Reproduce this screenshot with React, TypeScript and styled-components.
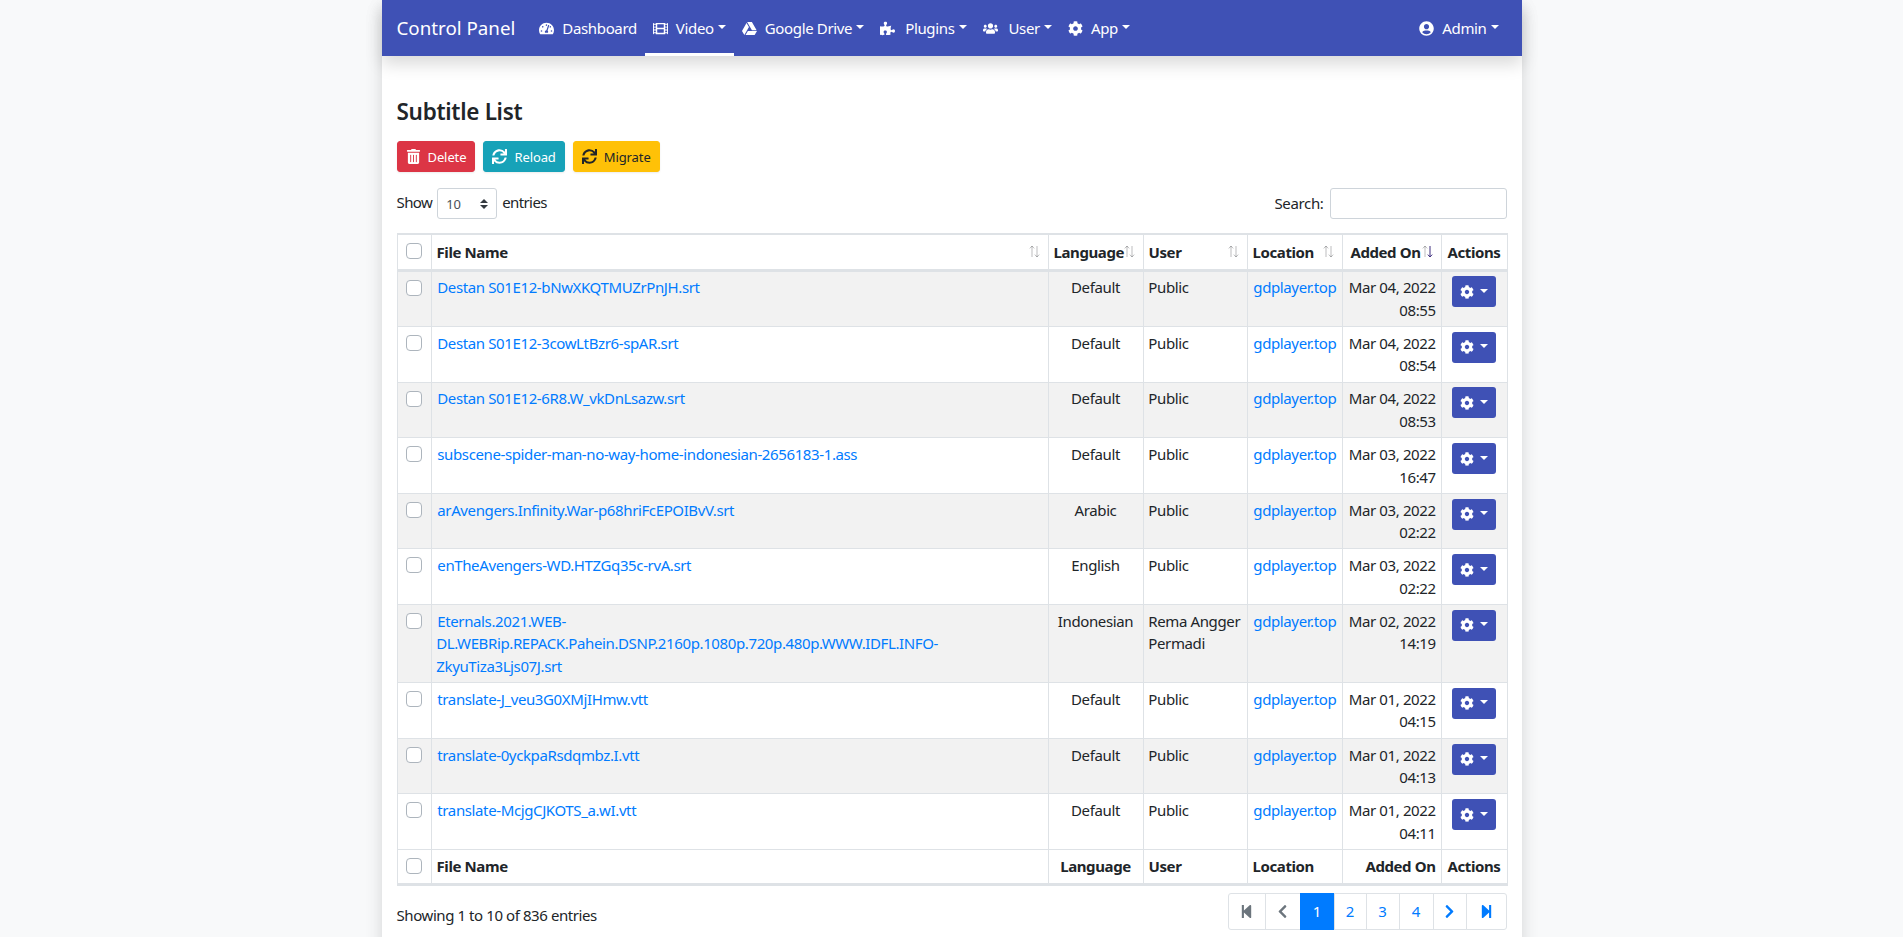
import React from 'react';
import styled, { createGlobalStyle } from 'styled-components';
import {
    FaTachometerAlt,
    FaFilm,
    FaGoogleDrive,
    FaPuzzlePiece,
    FaUsers,
    FaCog,
    FaUserCircle,
    FaTrashAlt,
    FaSync,
    FaStepBackward,
    FaStepForward,
    FaChevronLeft,
    FaChevronRight,
} from 'react-icons/fa';

const FONT = '"Noto Sans", "Open Sans", Arial, sans-serif';

const GlobalStyle = createGlobalStyle`
    html { overflow: hidden; }
    body {
        margin: 0;
        background: #f8f9fa;
        color: #212529;
        font-family: ${FONT};
        font-size: 15px;
        line-height: 1.5;
    }
    * { box-sizing: border-box; }
    svg { height: 1em; width: auto; }
`;

const Page = styled.div`
    width: 1140px;
    min-height: 100vh;
    margin: 0 auto;
    background: #fff;
    box-shadow: 0 8px 16px rgba(0, 0, 0, 0.15);
`;

const Navbar = styled.nav`
    height: 56px;
    padding: 0 15px;
    display: flex;
    align-items: stretch;
    background: #3f51b5;
    box-shadow: 0 8px 16px rgba(0, 0, 0, 0.15);
`;

const Brand = styled.a`
    align-self: center;
    margin-right: 16px;
    color: #fff;
    font-size: 18.75px;
    letter-spacing: 0;
    white-space: nowrap;
`;

const NavLink = styled.a<{ $active?: boolean; $right?: boolean; $extra?: number }>`
    display: flex;
    align-items: center;
    gap: 8px;
    padding: 0 8px;
    margin-left: ${(p) => (p.$right ? 'auto' : '0')};
    color: #fff;
    letter-spacing: -0.35px;
    white-space: nowrap;
    border-bottom: 3px solid ${(p) => (p.$active ? '#fff' : 'transparent')};
    border-top: 3px solid transparent;
    svg {
        font-size: 15px;
        margin-right: ${(p) => p.$extra ?? 0}px;
    }
`;

const Caret = styled.i`
    display: inline-block;
    width: 0;
    height: 0;
    margin-left: -4px;
    margin-bottom: 3px;
    border-top: 4.5px solid currentColor;
    border-left: 4.5px solid transparent;
    border-right: 4.5px solid transparent;
`;

const Content = styled.main`
    padding: 42px 15px 20px;
`;

const Heading = styled.h3`
    margin: 0 0 16px;
    font-size: 22.5px;
    font-weight: 600;
    line-height: 27px;
    letter-spacing: -0.3px;
`;

const Toolbar = styled.div`
    display: flex;
    gap: 8px;
    margin-bottom: 16px;
`;

const ActionButton = styled.button<{ $bg: string; $fg: string }>`
    height: 31px;
    padding: 0 8px;
    display: flex;
    align-items: center;
    gap: 7px;
    border: 1px solid ${(p) => p.$bg};
    border-radius: 3px;
    background: ${(p) => p.$bg};
    color: ${(p) => p.$fg};
    font-family: ${FONT};
    font-size: 13px;
    letter-spacing: -0.1px;
    box-shadow: 0 1px 2px rgba(0, 0, 0, 0.08);
    svg { font-size: 15px; }
`;

const FilterRow = styled.div`
    display: flex;
    justify-content: space-between;
    align-items: flex-start;
    height: 31px;
    margin-bottom: 14px;
`;

const Label = styled.label`
    display: flex;
    align-items: center;
    gap: 6px;
    letter-spacing: -0.35px;
`;

const ShowLabel = styled(Label)`
    margin-top: -3px;
    gap: 5px;
    letter-spacing: -0.6px;
`;

const Select = styled.select`
    appearance: none;
    width: 60px;
    height: 31px;
    margin-top: 3px;
    padding: 0 8px;
    border: 1px solid #ced4da;
    border-radius: 3px;
    background: #fff url("data:image/svg+xml,%3csvg xmlns='http://www.w3.org/2000/svg' width='4' height='5' viewBox='0 0 4 5'%3e%3cpath fill='%23343a40' d='M2 0L0 2h4zm0 5L0 3h4z'/%3e%3c/svg%3e") no-repeat right 8px center / 8px 10px;
    color: #495057;
    font-family: ${FONT};
    font-size: 13px;
`;

const SearchInput = styled.input`
    width: 177px;
    height: 31px;
    border: 1px solid #ced4da;
    border-radius: 3px;
    background: #fff;
`;

const Table = styled.table`
    width: 1110px;
    table-layout: fixed;
    border-collapse: collapse;
    border: 1px solid #dee2e6;
`;

const Col = styled.col<{ $w: number }>`
    width: ${(p) => p.$w}px;
`;

const HeadCell = styled.th<{ $align?: string; $sort?: boolean }>`
    position: relative;
    height: 36px;
    padding: 4px ${(p) => (p.$sort ? '20px' : '5px')} 4px 5px;
    border: 1px solid #dee2e6;
    border-top-width: 2px;
    border-bottom-width: 3px;
    text-align: ${(p) => p.$align || 'left'};
    font-weight: 700;
    letter-spacing: -0.4px;
    white-space: nowrap;
`;

const FootCell = styled(HeadCell)`
    height: 35px;
    border-top-width: 1px;
    border-bottom-width: 3px;
`;

const SortMark = styled.svg`
    position: absolute;
    right: 8px;
    top: 10px;
    width: 11px;
    height: 13px;
`;

const Row = styled.tr<{ $striped: boolean }>`
    background: ${(p) => (p.$striped ? '#f2f2f2' : '#fff')};
`;

const Cell = styled.td<{ $align?: string }>`
    padding: 4.8px;
    vertical-align: top;
    border: 1px solid #dee2e6;
    text-align: ${(p) => p.$align || 'left'};
    letter-spacing: -0.38px;
`;

const CheckCell = styled(Cell)`
    padding: 5px 0 0 8px;
`;

const HeadCheckCell = styled(HeadCell)`
    padding: 2px 0 6px 8px;
`;

const FootCheckCell = styled(FootCell)`
    padding: 2px 0 6px 8px;
`;

const Check = styled.input.attrs({ type: 'checkbox' })`
    appearance: none;
    display: block;
    width: 16px;
    height: 16px;
    margin: 3px 0 0;
    border: 1px solid #adb5bd;
    border-radius: 4px;
    background: #fff;
`;

const FileLink = styled.a`
    margin-left: 1px;
    color: #007bff;
    text-decoration: none;
`;

const GearButton = styled.button`
    width: 44px;
    height: 31px;
    display: inline-flex;
    align-items: center;
    justify-content: center;
    gap: 6px;
    padding: 0;
    border: 0;
    border-radius: 3px;
    background: #3f51b5;
    color: #fff;
    font-size: 14px;
    vertical-align: top;
    ${Caret} {
        margin: 0 0 2px;
        border-top-width: 4px;
        border-left-width: 4px;
        border-right-width: 4px;
    }
`;

const Footer = styled.div`
    display: flex;
    justify-content: space-between;
    align-items: flex-start;
    margin-top: 7px;
`;

const Info = styled.div`
    margin-top: 11px;
    letter-spacing: -0.42px;
`;

const Pager = styled.ul`
    display: flex;
    height: 37px;
    margin: 0;
    padding: 0;
    list-style: none;
    border-radius: 3px;
`;

const PageItem = styled.li<{ $w: number; $active?: boolean; $muted?: boolean }>`
    width: ${(p) => p.$w}px;
    display: flex;
    align-items: center;
    justify-content: center;
    margin-left: -1px;
    border: 1px solid ${(p) => (p.$active ? '#007bff' : '#dee2e6')};
    background: ${(p) => (p.$active ? '#007bff' : '#fff')};
    color: ${(p) => (p.$active ? '#fff' : p.$muted ? '#6c757d' : '#007bff')};
    &:first-child { border-radius: 3px 0 0 3px; }
    &:last-child { border-radius: 0 3px 3px 0; }
    svg { font-size: 15px; }
`;

type Entry = {
    name: string;
    language: string;
    user: string;
    date: string;
};

const entries: Entry[] = [
    { name: 'Destan S01E12-bNwXKQTMUZrPnJH.srt', language: 'Default', user: 'Public', date: 'Mar 04, 2022 08:55' },
    { name: 'Destan S01E12-3cowLtBzr6-spAR.srt', language: 'Default', user: 'Public', date: 'Mar 04, 2022 08:54' },
    { name: 'Destan S01E12-6R8.W_vkDnLsazw.srt', language: 'Default', user: 'Public', date: 'Mar 04, 2022 08:53' },
    { name: 'subscene-spider-man-no-way-home-indonesian-2656183-1.ass', language: 'Default', user: 'Public', date: 'Mar 03, 2022 16:47' },
    { name: 'arAvengers.Infinity.War-p68hriFcEPOIBvV.srt', language: 'Arabic', user: 'Public', date: 'Mar 03, 2022 02:22' },
    { name: 'enTheAvengers-WD.HTZGq35c-rvA.srt', language: 'English', user: 'Public', date: 'Mar 03, 2022 02:22' },
    { name: 'Eternals.2021.WEB-DL.WEBRip.REPACK.Pahein.DSNP.2160p.1080p.720p.480p.WWW.IDFL.INFO-ZkyuTiza3Ljs07J.srt', language: 'Indonesian', user: 'Rema Angger Permadi', date: 'Mar 02, 2022 14:19' },
    { name: 'translate-J_veu3G0XMjIHmw.vtt', language: 'Default', user: 'Public', date: 'Mar 01, 2022 04:15' },
    { name: 'translate-0yckpaRsdqmbz.I.vtt', language: 'Default', user: 'Public', date: 'Mar 01, 2022 04:13' },
    { name: 'translate-McjgCJKOTS_a.wI.vtt', language: 'Default', user: 'Public', date: 'Mar 01, 2022 04:11' },
];

const columnWidths = [34, 617, 95, 104, 95, 99, 66];

function Sort({ active }: { active?: boolean }) {
    return (
        <SortMark viewBox="0 0 11 13" fill="none" strokeWidth="1">
            <path d="M3 12V1M.8 3.4 3 1l2.2 2.4" stroke="#212529" strokeOpacity="0.3" />
            <path d="M8 1v11M5.8 9.6 8 12l2.2-2.4" stroke={active ? '#3f2f7f' : '#212529'} strokeOpacity={active ? 1 : 0.3} />
        </SortMark>
    );
}

export default function App() {
    return (
        <Page>
            <GlobalStyle />
            <Navbar>
                <Brand>Control Panel</Brand>
                <NavLink><FaTachometerAlt />Dashboard</NavLink>
                <NavLink $active><FaFilm />Video<Caret /></NavLink>
                <NavLink><FaGoogleDrive />Google Drive<Caret /></NavLink>
                <NavLink $extra={2}><FaPuzzlePiece />Plugins<Caret /></NavLink>
                <NavLink $extra={3}><FaUsers />User<Caret /></NavLink>
                <NavLink><FaCog />App<Caret /></NavLink>
                <NavLink $right><FaUserCircle />Admin<Caret /></NavLink>
            </Navbar>
            <Content>
                <Heading>Subtitle List</Heading>
                <Toolbar>
                    <ActionButton $bg="#dc3545" $fg="#fff"><FaTrashAlt />Delete</ActionButton>
                    <ActionButton $bg="#17a2b8" $fg="#fff"><FaSync />Reload</ActionButton>
                    <ActionButton $bg="#ffc107" $fg="#212529"><FaSync />Migrate</ActionButton>
                </Toolbar>
                <FilterRow>
                    <ShowLabel>
                        Show
                        <Select defaultValue="10">
                            <option>10</option>
                            <option>25</option>
                            <option>50</option>
                            <option>100</option>
                        </Select>
                        entries
                    </ShowLabel>
                    <Label>
                        Search:
                        <SearchInput />
                    </Label>
                </FilterRow>
                <Table>
                    <colgroup>
                        {columnWidths.map((w, i) => <Col key={i} $w={w} />)}
                    </colgroup>
                    <thead>
                        <tr>
                            <HeadCheckCell><Check /></HeadCheckCell>
                            <HeadCell $sort>File Name<Sort /></HeadCell>
                            <HeadCell $sort $align="center">Language<Sort /></HeadCell>
                            <HeadCell $sort>User<Sort /></HeadCell>
                            <HeadCell $sort>Location<Sort /></HeadCell>
                            <HeadCell $sort $align="right">Added On<Sort active /></HeadCell>
                            <HeadCell $align="center">Actions</HeadCell>
                        </tr>
                    </thead>
                    <tbody>
                        {entries.map((entry, i) => (
                            <Row key={entry.name} $striped={i % 2 === 0}>
                                <CheckCell><Check /></CheckCell>
                                <Cell><FileLink>{entry.name}</FileLink></Cell>
                                <Cell $align="center">{entry.language}</Cell>
                                <Cell>{entry.user}</Cell>
                                <Cell><FileLink>gdplayer.top</FileLink></Cell>
                                <Cell $align="right">{entry.date}</Cell>
                                <Cell $align="center">
                                    <GearButton><FaCog /><Caret /></GearButton>
                                </Cell>
                            </Row>
                        ))}
                    </tbody>
                    <tfoot>
                        <tr>
                            <FootCheckCell><Check /></FootCheckCell>
                            <FootCell>File Name</FootCell>
                            <FootCell $align="center">Language</FootCell>
                            <FootCell>User</FootCell>
                            <FootCell>Location</FootCell>
                            <FootCell $align="right">Added On</FootCell>
                            <FootCell $align="center">Actions</FootCell>
                        </tr>
                    </tfoot>
                </Table>
                <Footer>
                    <Info>Showing 1 to 10 of 836 entries</Info>
                    <Pager>
                        <PageItem $w={38} $muted><FaStepBackward /></PageItem>
                        <PageItem $w={36} $muted><FaChevronLeft /></PageItem>
                        <PageItem $w={35} $active>1</PageItem>
                        <PageItem $w={33}>2</PageItem>
                        <PageItem $w={34}>3</PageItem>
                        <PageItem $w={35}>4</PageItem>
                        <PageItem $w={34}><FaChevronRight /></PageItem>
                        <PageItem $w={41}><FaStepForward /></PageItem>
                    </Pager>
                </Footer>
            </Content>
        </Page>
    );
}
